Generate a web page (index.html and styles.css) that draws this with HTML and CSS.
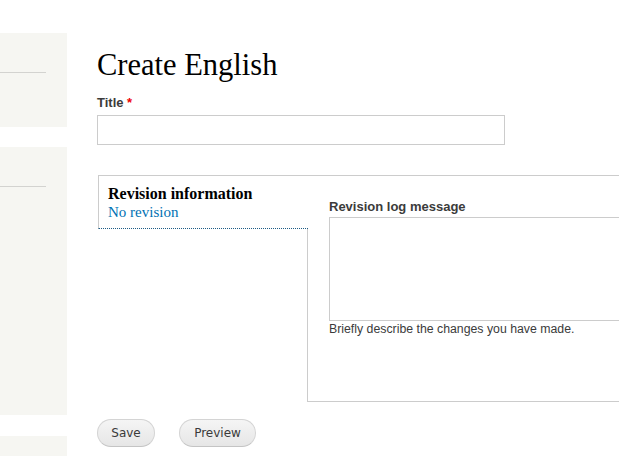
FILE: index.html
```html
<!DOCTYPE html>
<html lang="en">
<head>
<meta charset="utf-8">
<title>Create English</title>
<link rel="stylesheet" href="styles.css">
</head>
<body>
<div class="page">
  <aside class="sidebar">
    <div class="block block-one"><div class="block-title"></div></div>
    <div class="block block-two"><div class="block-title"></div></div>
    <div class="block block-three"></div>
  </aside>
  <main class="main">
    <h1 class="page-title">Create English</h1>
    <div class="form-item">
      <label class="form-label" for="title">Title <span class="required">*</span></label>
      <input class="form-text" id="title" type="text">
    </div>
    <div class="vertical-tabs">
      <div class="tab-list">
        <div class="tab selected">
          <strong class="tab-title">Revision information</strong>
          <a class="tab-summary" href="#">No revision</a>
        </div>
      </div>
      <div class="tab-pane">
        <label class="form-label" for="log">Revision log message</label>
        <textarea class="form-textarea" id="log"></textarea>
        <div class="description">Briefly describe the changes you have made.</div>
      </div>
    </div>
    <div class="actions">
      <button class="button button-save" type="button">Save</button>
      <button class="button button-preview" type="button">Preview</button>
    </div>
  </main>
</div>
</body>
</html>
```
FILE: styles.css
```css
html, body {
  margin: 0;
  padding: 0;
  background: #fff;
  overflow: hidden;
}
body {
  width: 619px;
  height: 456px;
}
.page {
  display: flex;
  align-items: flex-start;
  width: 800px;
}
.sidebar {
  width: 67px;
  flex: none;
  padding-top: 33px;
  margin-right: 30px;
  display: flex;
  flex-direction: column;
  gap: 20px;
}
.block {
  background: #f6f6f2;
}
.block-one { height: 94px; }
.block-two { height: 268px; }
.block-three { height: 60px; margin-top: 1px; }
.block-title {
  width: 46px;
  height: 39px;
  border-bottom: 1px solid #d3d3d0;
}
.main {
  width: 650px;
  flex: none;
  padding-top: 47px;
}
.page-title {
  margin: 0;
  font-family: "Liberation Serif", serif;
  font-weight: normal;
  font-size: 30.5px;
  line-height: 36px;
  color: #000;
}
.form-item {
  margin-top: 11px;
}
.form-label {
  display: block;
  font-family: "Liberation Sans", Arial, sans-serif;
  font-weight: bold;
  font-size: 13px;
  line-height: 17px;
  color: #3b3b3b;
}
.required {
  color: #ee0000;
}
.form-text {
  display: block;
  box-sizing: border-box;
  margin: 4px 0 0;
  width: 408px;
  height: 30px;
  border: 1px solid #cccccc;
  padding: 4px;
  font-size: 13px;
  background: #fff;
}
.vertical-tabs {
  display: flex;
  margin: 30px 0 0 1px;
}
.tab-list {
  width: 210px;
  flex: none;
  margin-right: -1px;
  position: relative;
  z-index: 1;
}
.tab {
  box-sizing: border-box;
  background: #fff;
  border-top: 1px solid #cccccc;
  border-left: 1px solid #cccccc;
  border-bottom: 1px dotted #1d5c85;
  padding: 9px 0 6px 9px;
  height: 54px;
}
.tab-title {
  display: block;
  font-family: "Liberation Serif", serif;
  font-weight: bold;
  font-size: 16px;
  line-height: 18px;
  color: #000;
}
.tab-summary {
  display: block;
  font-family: "Liberation Serif", serif;
  font-size: 15px;
  line-height: 18px;
  color: #0071b3;
  text-decoration: none;
}
.tab-pane {
  flex: 1;
  box-sizing: border-box;
  height: 227px;
  border: 1px solid #cccccc;
  padding: 22px 0 0 21px;
}
.form-textarea {
  display: block;
  box-sizing: border-box;
  margin: 2px 0 0;
  width: 400px;
  height: 104px;
  border: 1px solid #cccccc;
  resize: none;
  background: #fff;
}
.description {
  margin-top: 1px;
  font-family: "Liberation Sans", Arial, sans-serif;
  font-size: 12.3px;
  line-height: 15px;
  color: #3b3b3b;
}
.actions {
  display: flex;
  gap: 24px;
  margin-top: 17px;
}
.button {
  box-sizing: border-box;
  height: 28px;
  padding: 0;
  border: 1px solid #d4d4d4;
  border-bottom-color: #c4c4c4;
  border-radius: 14px;
  background: linear-gradient(#f5f5f5, #e6e6e6);
  font-family: "DejaVu Sans", Verdana, sans-serif;
  font-size: 12px;
  color: #3a3a3a;
  cursor: pointer;
}
.button-save { width: 58px; }
.button-preview { width: 77px; }
```
